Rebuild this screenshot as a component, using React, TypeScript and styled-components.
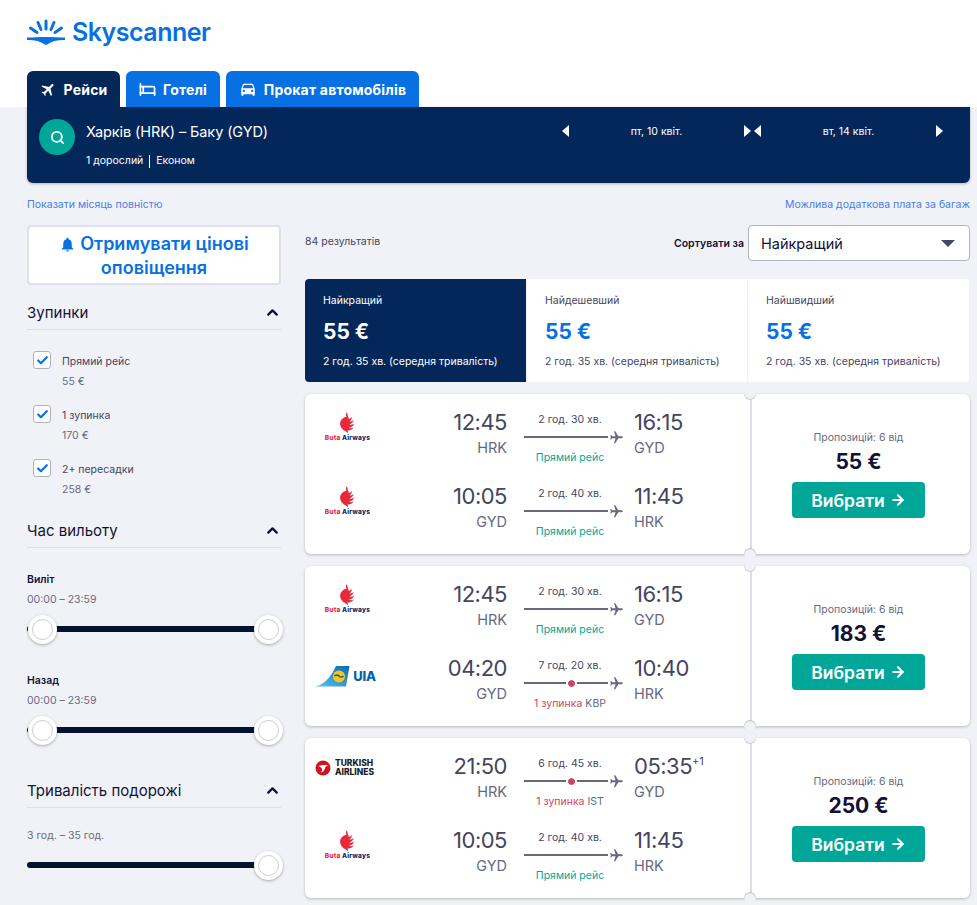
import React from "react";
import styled, { createGlobalStyle } from "styled-components";
import { Bed, Check, ChevronUp, Search, ArrowRight } from "lucide-react";
import { MdFlight, MdDirectionsCar, MdNotifications } from "react-icons/md";

const FONT = `Inter, "Noto Sans", "Liberation Sans", sans-serif`;

const Global = createGlobalStyle`
  html, body { margin: 0; padding: 0; background: #f1f2f8; }
  body { font-family: ${FONT}; color: #111236; overflow-x: hidden; }
  * { box-sizing: border-box; }
`;

const Page = styled.div`width: 977px; min-height: 905px;`;

const Header = styled.header`
  height: 107px; background: #fff; padding: 17px 0 0 27px;
  display: flex; flex-direction: column;
`;
const LogoRow = styled.div`display: flex; align-items: center; gap: 7px; height: 30px; margin-bottom: 24px;`;
const LogoText = styled.span`font-size: 25px; font-weight: 600; color: #0770e3; letter-spacing: -0.5px; line-height: 30px;`;
const Tabs = styled.nav`display: flex; gap: 6px;`;
const Tab = styled.div<{ $active?: boolean; $w: number }>`
  width: ${(p) => p.$w}px; height: 36px; border-radius: 6px 6px 0 0;
  background: ${(p) => (p.$active ? "#042759" : "#0770e3")}; color: #fff;
  display: flex; align-items: center; justify-content: center; gap: 7px;
  font-size: 14px; font-weight: 700; letter-spacing: 0.2px;
`;

const SearchBar = styled.section`
  margin: 0 7px 0 27px; height: 76px; background: #042759; color: #fff;
  border-radius: 0 0 6px 6px; box-shadow: 0 1px 3px rgba(37,32,31,.3);
  display: flex; padding: 12px 12px 0 12px;
`;
const SearchCircle = styled.div`
  width: 36px; height: 36px; border-radius: 50%; background: #00a698;
  display: flex; align-items: center; justify-content: center; flex: none;
`;
const Route = styled.div`margin-left: 11px; flex: 1;`;
const RouteTitle = styled.div`font-size: 14.5px; line-height: 20px; margin-top: 3px; letter-spacing: -0.1px;`;
const RouteSub = styled.div`display: flex; align-items: center; font-size: 10.5px; line-height: 14px; margin-top: 12px;`;
const SubSep = styled.span`width: 1px; height: 13px; background: #fff; margin: 0 6px;`;
const DateNav = styled.div`
  width: 192px; height: 24px; display: flex; align-items: center; justify-content: space-between;
  font-size: 10.5px; padding: 0 3px 0 0;
`;
const DateNavs = styled.div`display: flex; margin-right: 12px; margin-top: 0;`;
const Tri = styled.span<{ $dir: "l" | "r" }>`
  width: 0; height: 0; border-top: 6px solid transparent; border-bottom: 6px solid transparent;
  ${(p) => (p.$dir === "l" ? "border-right: 7px solid #fff;" : "border-left: 7px solid #fff;")}
`;

const Links = styled.div`
  display: flex; justify-content: space-between; margin: 15px 7px 0 27px;
  font-size: 10.5px; line-height: 14px; color: #4b7de0;
`;

const Main = styled.main`display: grid; grid-template-columns: 254px 665px; gap: 24px; padding: 13px 0 0 27px;`;
const Side = styled.aside`display: flex; flex-direction: column;`;

const AlertBtn = styled.div`
  height: 60px; background: #fff; border: 2px solid #dfe0ea; border-radius: 4px;
  text-align: center; color: #0770e3; font-size: 18px; font-weight: 600; line-height: 24px;
  padding-top: 5px;
  svg { vertical-align: -3px; margin-right: 4px; }
`;

const SectionHead = styled.div<{ $mt: number }>`
  margin-top: ${(p) => p.$mt}px; height: 30px; border-bottom: 1px solid #dcdde8;
  display: flex; align-items: center; justify-content: space-between;
  font-size: 15px; line-height: 20px; padding-bottom: 4px; color: #111236;
`;
const Chevron = styled(ChevronUp)`margin-right: 0;`;

const CheckList = styled.div`padding: 21px 0 0 6px; display: flex; flex-direction: column;`;
const CheckRow = styled.div`display: flex; height: 54px; gap: 11px;`;
const CheckBoxMark = styled.div`
  width: 18px; height: 18px; background: #fff; border: 1px solid #b2b2bf; border-radius: 3px;
  display: flex; align-items: center; justify-content: center; flex: none;
`;
const CheckText = styled.div`padding-top: 3px;`;
const CheckLabel = styled.div`font-size: 10.5px; line-height: 16px; color: #444560;`;
const CheckPrice = styled.div`font-size: 10.5px; line-height: 16px; color: #68697f; margin-top: 4px;`;

const SliderLabel = styled.div<{ $mt: number }>`margin-top: ${(p) => p.$mt}px; font-size: 10.5px; font-weight: 600; line-height: 16px; color: #111236;`;
const SliderRange = styled.div<{ $mt?: number }>`margin-top: ${(p) => p.$mt ?? 4}px; font-size: 10.5px; line-height: 16px; color: #68697f;`;
const Slider = styled.div`position: relative; height: 28px; margin-top: 7px; width: 256px;`;
const Track = styled.div`position: absolute; left: 0; right: 13px; top: 11px; height: 6px; background: #03122f; border-radius: 3px;`;
const Thumb = styled.div<{ $left: number }>`
  position: absolute; left: ${(p) => p.$left}px; top: 0; width: 29px; height: 29px; border-radius: 50%;
  background: #fff; box-shadow: 0 1px 3px rgba(37,32,31,.35);
  display: flex; align-items: center; justify-content: center;
  &::after { content: ""; width: 19px; height: 19px; border-radius: 50%; border: 1px solid #c9cad6; }
`;

const Results = styled.div`display: flex; flex-direction: column;`;
const ResultsTop = styled.div`height: 36px; display: flex; align-items: center; justify-content: space-between;`;
const Count = styled.div`font-size: 10.5px; color: #444560; margin-top: -4px;`;
const SortWrap = styled.div`display: flex; align-items: center; gap: 4px;`;
const SortLabel = styled.span`font-size: 10.5px; font-weight: 600; color: #111236;`;
const Select = styled.div`
  width: 222px; height: 36px; background: #fff; border: 1px solid #b2b2bf; border-radius: 4px;
  display: flex; align-items: center; justify-content: space-between; padding: 0 14px 0 12px;
  font-size: 14.5px; color: #111236;
  &::after { content: ""; width: 0; height: 0; border-left: 7px solid transparent; border-right: 7px solid transparent; border-top: 7px solid #444560; }
`;

const SummaryTabs = styled.div`
  margin-top: 18px; width: 664px; height: 103px; display: grid; grid-template-columns: 221px 221px 222px;
  background: #fff; border-radius: 4px; overflow: hidden;
`;
const SummaryTab = styled.div<{ $active?: boolean }>`
  padding: 14px 0 0 18px;
  background: ${(p) => (p.$active ? "#042759" : "#fff")};
  color: ${(p) => (p.$active ? "#fff" : "#444560")};
  & + & { border-left: 1px solid ${(p) => (p.$active ? "transparent" : "#f1f2f8")}; }
`;
const SummaryLabel = styled.div`font-size: 10.5px; line-height: 16px;`;
const SummaryPrice = styled.div<{ $active?: boolean }>`
  font-size: 21px; font-weight: 700; line-height: 28px; margin-top: 9px;
  color: ${(p) => (p.$active ? "#fff" : "#0770e3")};
`;
const SummaryNote = styled.div`font-size: 10.5px; line-height: 16px; margin-top: 8px; white-space: nowrap;`;

const Cards = styled.div`margin-top: 12px; display: flex; flex-direction: column; gap: 12px;`;
const Card = styled.article`
  position: relative; width: 665px; height: 160px; background: #fff; border-radius: 6px;
  box-shadow: 0 1px 3px rgba(37,32,31,.28);
  display: grid; grid-template-columns: 445px 220px;
  &::before, &::after {
    content: ""; position: absolute; left: 439px; width: 12px; height: 12px; border-radius: 50%;
    background: #f1f2f8;
  }
  &::before { top: -6px; box-shadow: inset 0 -1px 1px rgba(37,32,31,.18); }
  &::after { bottom: -6px; box-shadow: inset 0 1px 1px rgba(37,32,31,.25); }
`;
const Legs = styled.div`padding-top: 14px;`;
const Leg = styled.div`
  height: 74px; display: grid; grid-template-columns: 84px 118px 100px 1fr; column-gap: 0;
`;
const LogoCell = styled.div`display: flex; justify-content: center; align-items: flex-start; padding-top: 4px; padding-left: 1px;`;
const Stop = styled.div<{ $left?: boolean }>`
  display: flex; flex-direction: column;
  align-items: ${(p) => (p.$left ? "flex-start" : "flex-end")};
  ${(p) => (p.$left ? "margin-left: 27px;" : "")}
`;
const Time = styled.div`font-size: 22px; line-height: 28px; color: #444560; letter-spacing: -0.5px; white-space: nowrap;`;
const Sup = styled.sup`font-size: 11px; line-height: 0; letter-spacing: 0; vertical-align: 9px; color: #444560;`;
const Code = styled.div`font-size: 14.5px; line-height: 20px; margin-top: 2px; color: #68697f;`;
const Mid = styled.div`margin-left: 17px; width: 100px; display: flex; flex-direction: column;`;
const MidText = styled.div`width: 92px; text-align: center; white-space: nowrap; font-size: 10.5px; line-height: 16px; display: flex; justify-content: center;`;
const Duration = styled(MidText)`margin-top: 4px; color: #444560;`;
const LineRow = styled.div`height: 16px; margin-top: 1px; display: flex; align-items: center; gap: 1px; width: 100px;`;
const Line = styled.div`width: 84px; height: 2px; background: #68697f; display: flex; justify-content: center; align-items: center;`;
const Dot = styled.span`width: 7px; height: 7px; border-radius: 50%; background: #d1435b; outline: 2px solid #fff; margin-left: 10px;`;
const Direct = styled(MidText)`margin-top: 5px; color: #00a698;`;
const Stops = styled(MidText)`margin-top: 5px; color: #68697f; gap: 3px;`;
const StopsRed = styled.span`color: #d1435b;`;

const Plane = styled(MdFlight)`transform: rotate(90deg); color: #68697f; flex: none;`;

const BuyPanel = styled.div`
  border-left: 2px solid #dcdde6; display: flex; flex-direction: column; align-items: center;
  padding: 36px 5px 0 0;
`;
const Offers = styled.div`font-size: 10.5px; line-height: 16px; color: #68697f;`;
const Price = styled.div`font-size: 21px; font-weight: 700; line-height: 28px; margin-top: 2px; color: #111236;`;
const BuyBtn = styled.div`
  margin-top: 6px; width: 133px; height: 36px; border-radius: 4px; background: #00a698; color: #fff;
  display: flex; align-items: center; justify-content: center; gap: 5px;
  font-size: 17.5px; font-weight: 600;
`;

const ButaBox = styled.div`display: flex; flex-direction: column; align-items: center;`;
const ButaText = styled.div`font-size: 6.5px; font-weight: 800; line-height: 8px; white-space: nowrap; margin-top: 1px; letter-spacing: .2px; color: #0b2a66;`;
const ButaRed = styled.span`color: #e8293c;`;
const UiaBox = styled.div`display: flex; align-items: center; gap: 3px; margin: 7px 0 0 -4px;`;
const UiaText = styled.span`font-size: 13px; font-weight: 800; color: #0b5fa5; letter-spacing: -0.2px;`;
const TkBox = styled.div`display: flex; align-items: center; gap: 4px; margin: 3px 0 0 -6px;`;
const TkText = styled.span`font-size: 8.5px; font-weight: 800; line-height: 8.5px; color: #1b1b1f; letter-spacing: 0;`;

const Buta = () => (
  <ButaBox>
    <svg width="16" height="21" viewBox="0 0 16 21" aria-hidden>
      <path fill="#e8293c" d="M8 0c-1 1-1.5 3-.5 5C5 5 2 7 1.2 10.500.6 13.500 2.500 17 6 19c1 .7 2 1.200 3 2 .1-1 0-1.800-.5-2.500 2.500.3 5-.8 6-3-1.800.8-3.500.8-4.800.2 2.500-.3 4.800-1.800 5.500-4-1.800 1-3.500 1.200-5 .9 2.300-.8 4.200-2.500 4.500-4.600-1.500 1.200-3 1.700-4.300 1.700 1.500-1.200 2.600-3 2.400-4.700-1 1-2 1.700-3 2C9.700 5.500 8.400 3 8 0z" />
    </svg>
    <ButaText><ButaRed>Buta</ButaRed> Airways</ButaText>
  </ButaBox>
);
const Uia = () => (
  <UiaBox>
    <svg width="35" height="22" viewBox="0 0 35 22" aria-hidden>
      <defs>
        <linearGradient id="uiag" x1="0" y1="1" x2="1" y2="0">
          <stop offset="0" stopColor="#5cc4ec" />
          <stop offset="1" stopColor="#0a6ab3" />
        </linearGradient>
      </defs>
      <path fill="url(#uiag)" d="M0 21.500C8 20 15 14 21 1h13.500L31 21.500z" />
      <circle cx="24" cy="11.500" r="6" fill="#f6c61a" />
      <path fill="none" stroke="#0a5a9a" strokeWidth="1.400" d="M19.500 11c2-1.500 3.500-1 4.500 0s3 1.500 4.500 0" />
    </svg>
    <UiaText>UIA</UiaText>
  </UiaBox>
);
const Turkish = () => (
  <TkBox>
    <svg width="16" height="16" viewBox="0 0 16 16" aria-hidden>
      <circle cx="8" cy="8" r="7.500" fill="#d6121f" />
      <path fill="#fff" d="M3.500 6c3-1.200 7-1.300 10-.7-2 .6-3.300 1.800-3.700 3.500-.5 2-2 3.200-4 3.700 1-1 1.500-2 1.300-3.200C6.800 8 5.500 6.800 3.500 6z" />
    </svg>
    <TkText>TURKISH<br />AIRLINES</TkText>
  </TkBox>
);

type LegData = {
  logo: React.ReactNode; dep: string; from: string; dur: string; stop?: string; arr: string; to: string; plus?: boolean;
};

const FlightLeg = ({ d }: { d: LegData }) => (
  <Leg>
    <LogoCell>{d.logo}</LogoCell>
    <Stop>
      <Time>{d.dep}</Time>
      <Code>{d.from}</Code>
    </Stop>
    <Mid>
      <Duration>{d.dur}</Duration>
      <LineRow>
        <Line>{d.stop && <Dot />}</Line>
        <Plane size={15} />
      </LineRow>
      {d.stop ? (
        <Stops><StopsRed>1 зупинка</StopsRed> {d.stop}</Stops>
      ) : (
        <Direct>Прямий рейс</Direct>
      )}
    </Mid>
    <Stop $left>
      <Time>{d.arr}{d.plus && <Sup>+1</Sup>}</Time>
      <Code>{d.to}</Code>
    </Stop>
  </Leg>
);

const out = (logo: React.ReactNode): LegData => ({ logo, dep: "12:45", from: "HRK", dur: "2 год. 30 хв.", arr: "16:15", to: "GYD" });
const back = (logo: React.ReactNode): LegData => ({ logo, dep: "10:05", from: "GYD", dur: "2 год. 40 хв.", arr: "11:45", to: "HRK" });

const cards: { legs: LegData[]; price: string }[] = [
  { legs: [out(<Buta />), back(<Buta />)], price: "55 €" },
  { legs: [out(<Buta />), { logo: <Uia />, dep: "04:20", from: "GYD", dur: "7 год. 20 хв.", stop: "KBP", arr: "10:40", to: "HRK" }], price: "183 €" },
  { legs: [{ logo: <Turkish />, dep: "21:50", from: "HRK", dur: "6 год. 45 хв.", stop: "IST", arr: "05:35", to: "GYD", plus: true }, back(<Buta />)], price: "250 €" },
];

const DoubleSlider = () => (
  <Slider>
    <Track />
    <Thumb $left={1} />
    <Thumb $left={227} />
  </Slider>
);

const filters = [
  ["Прямий рейс", "55 €"],
  ["1 зупинка", "170 €"],
  ["2+ пересадки", "258 €"],
];
const summary = [
  { label: "Найкращий", active: true },
  { label: "Найдешевший" },
  { label: "Найшвидший" },
];

export default function App() {
  return (
    <Page>
      <Global />
      <Header>
        <LogoRow>
          <svg width="38" height="27" viewBox="0 0 38 27" aria-hidden>
            <g stroke="#0770e3" strokeWidth="3" strokeLinecap="round" fill="none">
              <path d="M19 2v8M11 3.500l3 7M27 3.500l-3 7M3.500 9l6.500 4.500M34.500 9L28 13.500" />
            </g>
            <path fill="#0770e3" d="M0 18.500c6 0 13-.5 19-.5s13 .5 19 .5v2.500c-7-.2-13 1-19 5-6-4-12-5.200-19-5z" />
          </svg>
          <LogoText>Skyscanner</LogoText>
        </LogoRow>
        <Tabs>
          <Tab $active $w={93}><MdFlight size={17} style={{ transform: "rotate(45deg)" }} />Рейси</Tab>
          <Tab $w={94}><Bed size={17} strokeWidth={2.4} />Готелі</Tab>
          <Tab $w={193}><MdDirectionsCar size={18} />Прокат автомобілів</Tab>
        </Tabs>
      </Header>

      <SearchBar>
        <SearchCircle><Search size={15} strokeWidth={3} color="#fff" /></SearchCircle>
        <Route>
          <RouteTitle>Харків (HRK) – Баку (GYD)</RouteTitle>
          <RouteSub>1 дорослий<SubSep />Економ</RouteSub>
        </Route>
        <DateNavs>
          <DateNav><Tri $dir="l" />пт, 10 квіт.<Tri $dir="r" /></DateNav>
          <DateNav><Tri $dir="l" />вт, 14 квіт.<Tri $dir="r" /></DateNav>
        </DateNavs>
      </SearchBar>

      <Links>
        <span>Показати місяць повністю</span>
        <span>Можлива додаткова плата за багаж</span>
      </Links>

      <Main>
        <Side>
          <AlertBtn><MdNotifications size={17} />Отримувати цінові оповіщення</AlertBtn>

          <SectionHead $mt={15}>Зупинки<Chevron size={17} strokeWidth={3.2} /></SectionHead>
          <CheckList>
            {filters.map(([label, price]) => (
              <CheckRow key={label}>
                <CheckBoxMark><Check size={13} strokeWidth={4} color="#0770e3" /></CheckBoxMark>
                <CheckText>
                  <CheckLabel>{label}</CheckLabel>
                  <CheckPrice>{price}</CheckPrice>
                </CheckText>
              </CheckRow>
            ))}
          </CheckList>

          <SectionHead $mt={5}>Час вильоту<Chevron size={17} strokeWidth={3.2} /></SectionHead>
          <SliderLabel $mt={24}>Виліт</SliderLabel>
          <SliderRange>00:00 – 23:59</SliderRange>
          <DoubleSlider />
          <SliderLabel $mt={30}>Назад</SliderLabel>
          <SliderRange>00:00 – 23:59</SliderRange>
          <DoubleSlider />

          <SectionHead $mt={34}>Тривалість подорожі<Chevron size={17} strokeWidth={3.2} /></SectionHead>
          <SliderRange $mt={20}>3 год. – 35 год.</SliderRange>
          <Slider>
            <Track />
            <Thumb $left={227} />
          </Slider>
        </Side>

        <Results>
          <ResultsTop>
            <Count>84 результатів</Count>
            <SortWrap>
              <SortLabel>Сортувати за</SortLabel>
              <Select>Найкращий</Select>
            </SortWrap>
          </ResultsTop>

          <SummaryTabs>
            {summary.map((s) => (
              <SummaryTab key={s.label} $active={s.active}>
                <SummaryLabel>{s.label}</SummaryLabel>
                <SummaryPrice $active={s.active}>55 €</SummaryPrice>
                <SummaryNote>2 год. 35 хв. (середня тривалість)</SummaryNote>
              </SummaryTab>
            ))}
          </SummaryTabs>

          <Cards>
            {cards.map((c) => (
              <Card key={c.price}>
                <Legs>
                  {c.legs.map((l, i) => <FlightLeg key={i} d={l} />)}
                </Legs>
                <BuyPanel>
                  <Offers>Пропозицій: 6 від</Offers>
                  <Price>{c.price}</Price>
                  <BuyBtn>Вибрати<ArrowRight size={16} strokeWidth={3.2} /></BuyBtn>
                </BuyPanel>
              </Card>
            ))}
          </Cards>
        </Results>
      </Main>
    </Page>
  );
}
